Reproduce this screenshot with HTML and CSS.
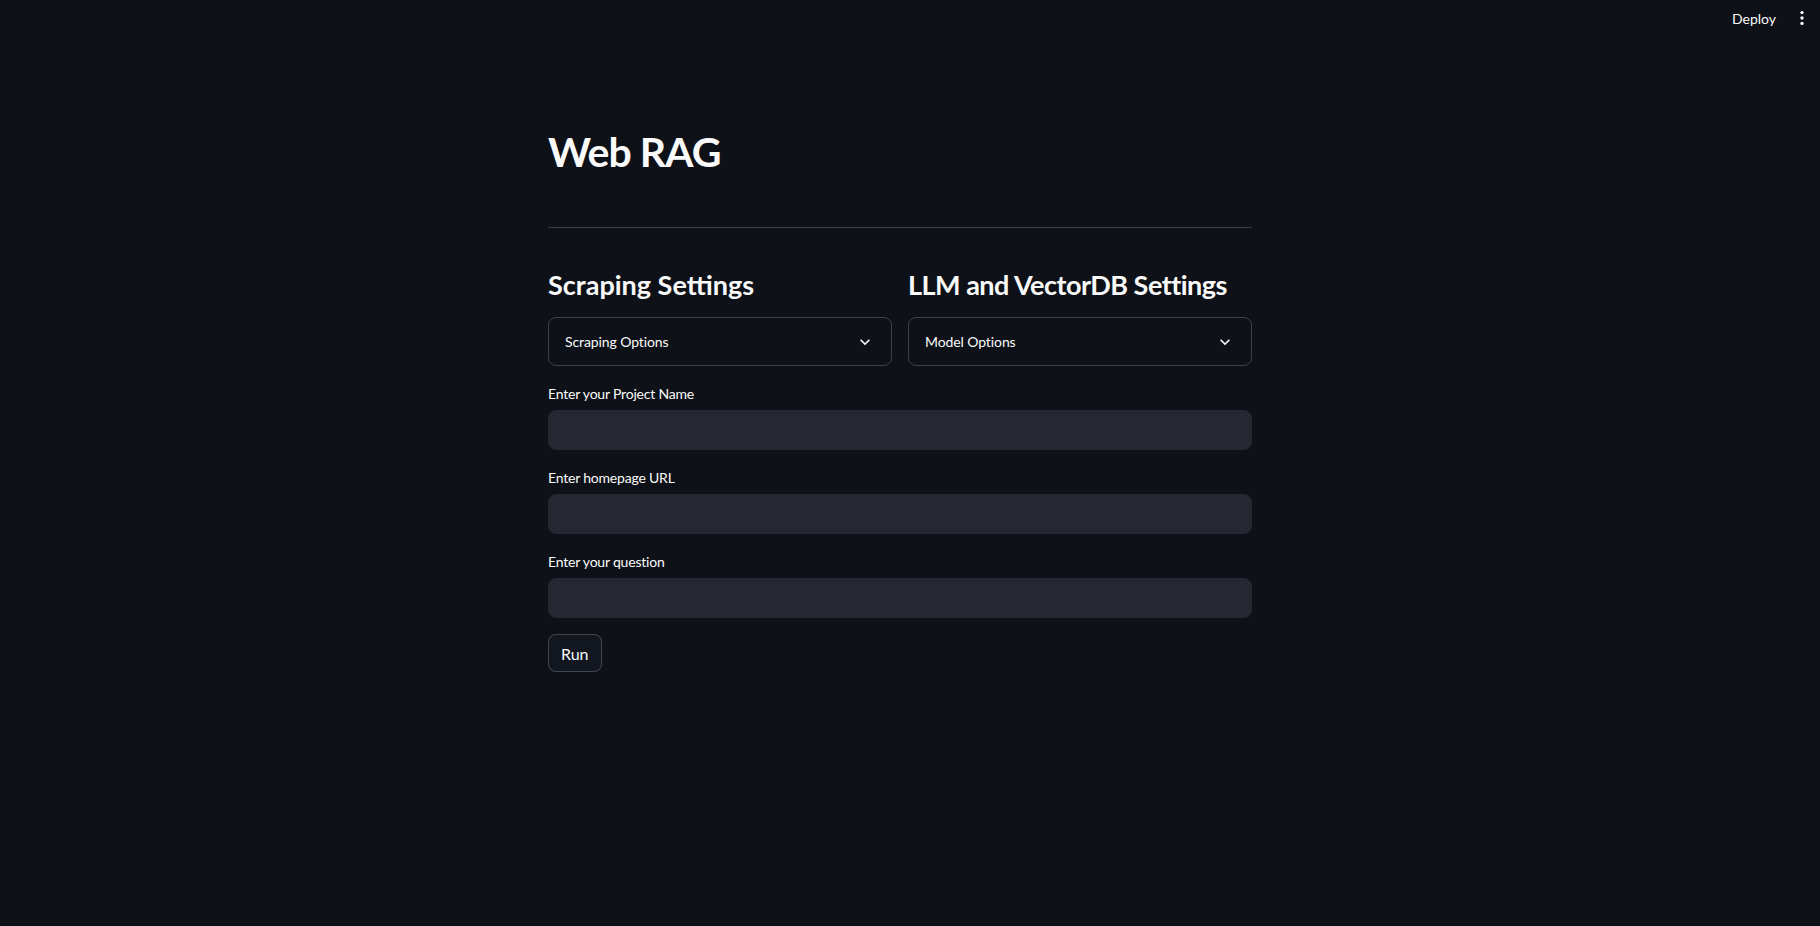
FILE: index.html
```html
<!DOCTYPE html>
<html lang="en">
<head>
<meta charset="utf-8">
<title>Web RAG</title>
<link rel="stylesheet" href="styles.css">
</head>
<body>
<header class="toolbar">
  <button class="deploy">Deploy</button>
  <button class="menu" aria-label="Main menu">
    <svg viewBox="0 0 24 24" width="20" height="20"><circle cx="12" cy="5.5" r="2" fill="#fafafa"/><circle cx="12" cy="12" r="2" fill="#fafafa"/><circle cx="12" cy="18.5" r="2" fill="#fafafa"/></svg>
  </button>
</header>
<main class="main">
  <h1 class="title">Web RAG</h1>
  <hr class="divider">
  <div class="columns">
    <div class="col">
      <h3 class="subheader">Scraping Settings</h3>
      <div class="expander">
        <span class="exp-label">Scraping Options</span>
        <svg class="chev" viewBox="0 0 24 24" width="20" height="20"><path d="M16.59 8.59L12 13.17 7.41 8.59 6 10l6 6 6-6z" fill="#fafafa"/></svg>
      </div>
    </div>
    <div class="col">
      <h3 class="subheader">LLM and VectorDB Settings</h3>
      <div class="expander">
        <span class="exp-label">Model Options</span>
        <svg class="chev" viewBox="0 0 24 24" width="20" height="20"><path d="M16.59 8.59L12 13.17 7.41 8.59 6 10l6 6 6-6z" fill="#fafafa"/></svg>
      </div>
    </div>
  </div>
  <div class="field">
    <label class="label">Enter your Project Name</label>
    <input class="input" type="text">
  </div>
  <div class="field">
    <label class="label">Enter homepage URL</label>
    <input class="input" type="text">
  </div>
  <div class="field">
    <label class="label">Enter your question</label>
    <input class="input" type="text">
  </div>
  <button class="run">Run</button>
</main>
</body>
</html>
```
FILE: styles.css
```css
* { box-sizing: border-box; }
html, body {
  margin: 0;
  padding: 0;
  background: #0e1117;
  color: #fafafa;
  font-family: "Lato", "Noto Sans", sans-serif;
}
body { min-height: 926px; }

.toolbar {
  height: 36px;
  display: flex;
  justify-content: flex-end;
  align-items: center;
  gap: 16px;
  padding-right: 8px;
}
.deploy {
  background: none;
  border: none;
  color: #fafafa;
  font-family: inherit;
  font-size: 14px;
  padding: 0;
  height: 24px;
}
.menu {
  background: none;
  border: none;
  padding: 0;
  width: 20px;
  height: 20px;
  display: flex;
}

.main {
  width: 704px;
  margin-left: calc(50% - 362px);
  padding-top: 89px;
}

.title {
  margin: 0;
  font-size: 41px;
  font-weight: 700;
  line-height: 53px;
  height: 53px;
  letter-spacing: -1px;
}

.divider {
  margin: 49px 0 0;
  border: none;
  height: 1px;
  background: rgba(250, 250, 250, 0.2);
}

.columns {
  display: grid;
  grid-template-columns: 1fr 1fr;
  gap: 16px;
  margin-top: 40px;
}
.subheader {
  margin: 0 0 15px;
  font-size: 27px;
  font-weight: 700;
  line-height: 34px;
  height: 34px;
  white-space: nowrap;
}
.col:last-child .subheader { letter-spacing: -0.5px; }
.expander {
  height: 49px;
  border: 1px solid rgba(250, 250, 250, 0.2);
  border-radius: 8px;
  display: flex;
  align-items: center;
  justify-content: space-between;
  padding: 0 16px;
}
.exp-label { font-size: 14px; letter-spacing: -0.1px; }
.chev { display: block; }

.field {
  margin-top: 16px;
}
.label {
  display: block;
  font-size: 14px;
  letter-spacing: -0.2px;
  line-height: 24px;
  height: 24px;
  margin-bottom: 4px;
}
.input {
  display: block;
  width: 100%;
  height: 40px;
  background: #262730;
  border: 1px solid #262730;
  border-radius: 8px;
  color: #fafafa;
  font-family: inherit;
  font-size: 16px;
  padding: 0 12px;
  outline: none;
}

.run {
  margin-top: 16px;
  height: 38px;
  padding: 0 12px;
  background: #131720;
  border: 1px solid rgba(250, 250, 250, 0.2);
  border-radius: 8px;
  color: #fafafa;
  font-family: inherit;
  font-size: 16px;
}
```
